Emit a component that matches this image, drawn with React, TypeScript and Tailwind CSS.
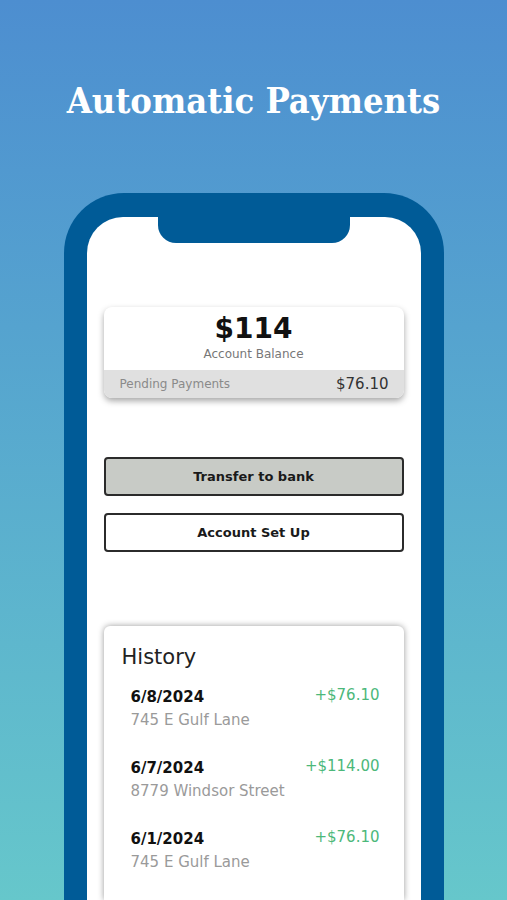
const history = [
  { date: "6/8/2024", address: "745 E Gulf Lane", amount: "+$76.10" },
  { date: "6/7/2024", address: "8779 Windsor Street", amount: "+$114.00" },
  { date: "6/1/2024", address: "745 E Gulf Lane", amount: "+$76.10" },
];

const sans = "font-['DejaVu_Sans',sans-serif]";

export default function App() {
  return (
    <div className="w-[507px] h-[900px] overflow-hidden bg-gradient-to-b from-[#4d8ed0] to-[#66c7cb] flex flex-col items-center">
      {/* Title */}
      <h1 className="mt-[76px] text-white text-[36px] leading-[48px] font-semibold font-stretch-condensed font-['DejaVu_Serif_Condensed','DejaVu_Serif',serif]">
        Automatic Payments
      </h1>

      {/* Phone */}
      <div className="mt-[69px] w-[380px] flex-1 bg-[#005b97] rounded-t-[60px] pt-[24px] px-[23px] flex flex-col">
        <div className="relative flex-1 bg-white rounded-t-[36px] px-[17px] pt-[90px] flex flex-col">
          {/* Notch */}
          <div className="absolute left-[71px] top-0 w-[192px] h-[26px] bg-[#005b97] rounded-b-[18px]" />

          {/* Balance card */}
          <div className={`rounded-[8px] overflow-hidden bg-white shadow-[0_3px_6px_rgba(0,0,0,0.35)] ${sans}`}>
            <div className="h-[63px] flex flex-col items-center pt-[5px]">
              <div className="text-[28px] leading-[34px] font-bold text-[#111]">$114</div>
              <div className="text-[12px] leading-[16px] text-[#777]">Account Balance</div>
            </div>
            <div className="h-[28px] bg-[#e0e0e0] flex items-center justify-between pl-[16px] pr-[15px]">
              <span className="text-[12px] text-[#8a8a8a]">Pending Payments</span>
              <span className="text-[15px] text-[#333]">$76.10</span>
            </div>
          </div>

          {/* Buttons */}
          <button className={`mt-[59px] h-[39px] rounded-[4px] border-2 border-[#2b2b2b] bg-[#c8cbc6] text-[13px] font-bold text-[#1a1a1a] ${sans}`}>
            Transfer to bank
          </button>
          <button className={`mt-[17px] h-[39px] rounded-[4px] border-2 border-[#2b2b2b] bg-white text-[13px] font-bold text-[#1a1a1a] ${sans}`}>
            Account Set Up
          </button>

          {/* History */}
          <div className={`mt-[74px] flex-1 rounded-t-[6px] bg-white shadow-[0_0_6px_rgba(0,0,0,0.4)] pt-[17px] ${sans}`}>
            <div className="pl-[18px] text-[21px] leading-[28px] text-[#222]">History</div>
            <div className="mt-[16px] flex flex-col gap-[28px] pl-[27px] pr-[24px]">
              {history.map((h, i) => (
                <div key={i} className="flex justify-between">
                  <div className="flex flex-col">
                    <span className="text-[15px] leading-[20px] font-bold text-[#111]">{h.date}</span>
                    <span className="mt-[3px] text-[15px] leading-[20px] text-[#9a9a9a]">{h.address}</span>
                  </div>
                  <span className="text-[15px] leading-[20px] text-[#4cb87a] -mt-[2px]">{h.amount}</span>
                </div>
              ))}
            </div>
          </div>
        </div>
      </div>
    </div>
  );
}
